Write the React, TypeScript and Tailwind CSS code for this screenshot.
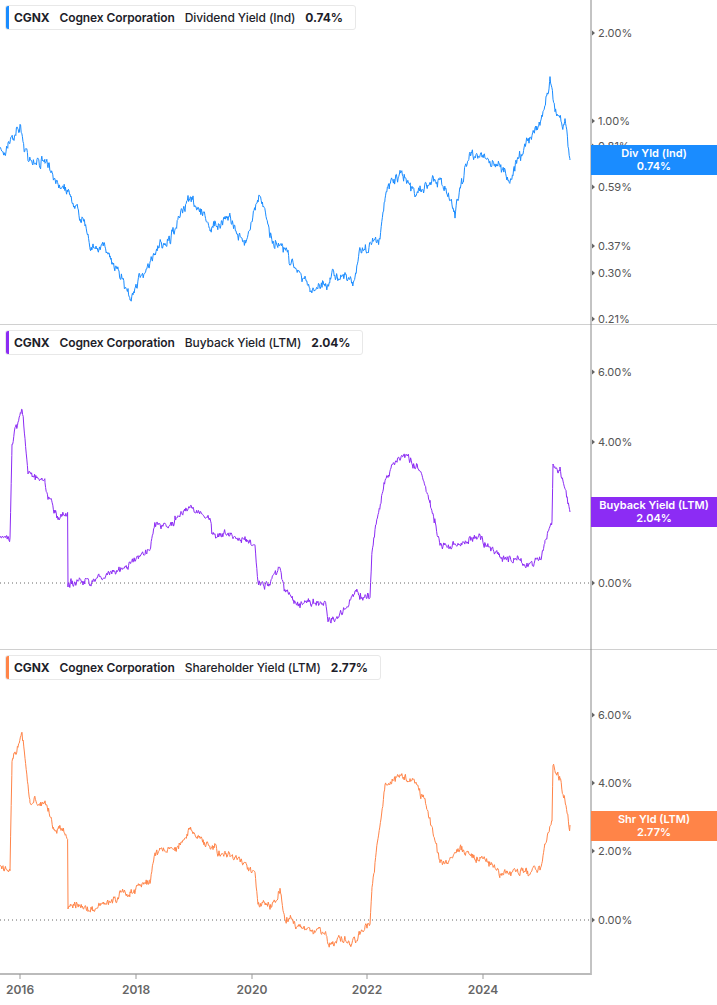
import React from "react";

type P = [number, number];
function rng(seed: number) {
  let s = seed;
  return () => {
    s = (s * 16807) % 2147483647;
    return s / 2147483647;
  };
}
function series(pts: P[], seed: number, amp: number, top: number): string {
  const r = rng(seed);
  const out: string[] = [];
  let drift = 0;
  let slow = 0;
  for (let i = 0; i < pts.length - 1; i++) {
    const [x0, y0] = pts[i];
    const [x1, y1] = pts[i + 1];
    if (x1 === x0) {
      out.push(`${x1},${y1 - top}`);
      continue;
    }
    for (let x = x0; x < x1; x += 0.6) {
      const t = (x - x0) / (x1 - x0);
      drift = drift * 0.6 + (r() - 0.5) * amp;
      slow = slow * 0.97 + (r() - 0.5) * amp * 0.5;
      const n = drift + slow + (r() - 0.5) * amp * 0.6;
      out.push(`${x.toFixed(1)},${(y0 + (y1 - y0) * t + n - top).toFixed(1)}`);
    }
  }
  const l = pts[pts.length - 1];
  out.push(`${l[0]},${l[1] - top}`);
  return out.join(" ");
}

const blue: P[] = [[0,150],[8,145],[20,128],[25,150],[45,160],[70,195],[90,240],[110,250],[130,293],[150,262],[170,240],[190,200],[210,225],[230,218],[245,240],[260,195],[270,235],[290,262],[310,292],[330,275],[355,282],[360,250],[380,232],[385,190],[400,182],[420,195],[440,188],[455,210],[470,145],[490,160],[510,180],[520,150],[540,125],[550,82],[555,115],[565,128],[570,160]];
const purple: P[] = [[0,540],[10,537],[12,440],[22,405],[28,472],[45,482],[55,515],[68,515],[68,587],[85,582],[110,572],[130,562],[150,552],[155,525],[175,520],[190,512],[210,520],[212,535],[230,537],[255,550],[258,585],[270,585],[280,570],[285,595],[300,605],[325,600],[328,620],[340,612],[355,595],[370,598],[372,550],[385,478],[400,455],[410,460],[425,480],[430,502],[440,545],[460,540],[480,540],[500,555],[515,560],[540,560],[545,540],[552,525],[553,465],[560,472],[570,512]];
const orange: P[] = [[0,870],[10,870],[12,760],[22,735],[30,800],[45,800],[55,830],[68,835],[68,905],[85,907],[110,903],[130,890],[150,880],[155,850],[175,845],[190,830],[210,850],[230,857],[255,875],[258,905],[270,905],[280,890],[285,920],[300,930],[325,933],[328,945],[340,937],[355,935],[370,918],[372,880],[385,785],[400,775],[410,775],[425,800],[430,820],[440,865],[460,855],[480,860],[500,870],[515,875],[540,870],[545,845],[552,820],[553,765],[560,775],[570,825]];

type Panel = {
  top: number; color: string; title: string; value: string;
  pts: P[]; seed: number; amp: number; labels: [string, number][]; zero?: number;
  tag: string; tagY: number;
};
const panels: Panel[] = [
  { top: 0, color: "#1a8cff", title: "Dividend Yield (Ind)", value: "0.74%", pts: blue, seed: 7, amp: 7, labels: [["2.00%",33],["1.00%",121],["0.81%",146],["0.59%",187],["0.37%",246],["0.30%",273],["0.21%",319]], tag: "Div Yld (Ind)", tagY: 145 },
  { top: 325, color: "#8c2cf4", title: "Buyback Yield (LTM)", value: "2.04%", pts: purple, seed: 11, amp: 5, labels: [["6.00%",372],["4.00%",442],["0.00%",583]], zero: 583, tag: "Buyback Yield (LTM)", tagY: 497 },
  { top: 650, color: "#ff8448", title: "Shareholder Yield (LTM)", value: "2.77%", pts: orange, seed: 23, amp: 5, labels: [["6.00%",715],["4.00%",783],["2.00%",851],["0.00%",920]], zero: 920, tag: "Shr Yld (LTM)", tagY: 811 },
];

export default function App() {
  const font = { fontFamily: "Inter, 'Liberation Sans', sans-serif" };
  return (
    <div className="w-[717px] h-[1005px] bg-white overflow-hidden" style={font}>
      {panels.map((p, i) => (
        <div key={i} className={`relative h-[325px] ${i < 2 ? "border-b border-[#d0d0d0]" : ""}`}>
          <svg width={717} height={325} className="block">
            <line x1={591} y1={0} x2={591} y2={325} stroke="#888" strokeWidth={1} />
            {p.zero !== undefined && (
              <line x1={0} y1={p.zero - p.top} x2={590} y2={p.zero - p.top} stroke="#666" strokeWidth={1} strokeDasharray="1 3" />
            )}
            {p.labels.map(([t, y]) => (
              <g key={t}>
                <path d={`M592 ${y - p.top - 2.5} L595 ${y - p.top} L592 ${y - p.top + 2.5}Z`} fill="#666" />
                <text x={598} y={y - p.top + 4} fontSize={11} fill="#555" style={font}>{t}</text>
              </g>
            ))}
            <polyline points={series(p.pts, p.seed, p.amp, p.top)} fill="none" stroke={p.color} strokeWidth={1} strokeLinejoin="round" />
          </svg>
          <div className="absolute left-[5px] top-[5px] h-[25px] flex items-center gap-[10px] pl-[8px] pr-[12px] bg-white border border-[#e8e8e8] rounded-[3px] text-[12px] tracking-[-0.1px] text-[#1e1e2a] overflow-hidden">
            <div className="absolute left-0 top-0 bottom-0 w-[3px]" style={{ background: p.color }} />
            <span className="font-bold">CGNX</span>
            <span className="font-semibold">Cognex Corporation</span>
            <span className="font-medium">{p.title}</span>
            <span className="font-bold">{p.value}</span>
          </div>
          <div
            className="absolute left-[591px] w-[126px] h-[30px] flex flex-col items-center justify-center text-white text-[11px] font-semibold leading-[13px]"
            style={{ top: p.tagY - p.top, background: p.color }}
          >
            <span>{p.tag}</span>
            <span>{p.value}</span>
          </div>
        </div>
      ))}
      <div className="relative h-[30px]">
        <svg width={717} height={30} className="block absolute top-[-2px]">
          <line x1={0} y1={1} x2={591} y2={1} stroke="#bbb" strokeWidth={2} />
          {[20, 136, 252, 367, 483].map((x, i) => (
            <g key={x}>
              <line x1={x} y1={1} x2={x} y2={6} stroke="#999" />
              <text x={x} y={21} textAnchor="middle" fontSize={12} fontWeight={600} fill="#666" style={font}>{2016 + i * 2}</text>
            </g>
          ))}
        </svg>
      </div>
    </div>
  );
}
